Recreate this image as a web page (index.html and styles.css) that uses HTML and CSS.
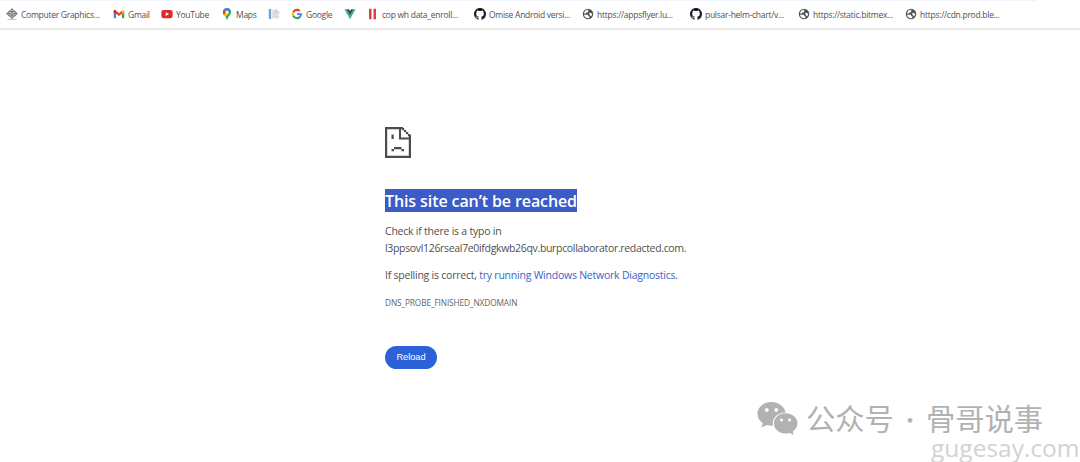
FILE: index.html
```html
<!DOCTYPE html>
<html lang="en">

<head>
  <meta charset="UTF-8">
  <meta name="viewport" content="width=device-width, initial-scale=1.0">
  <title>This site can’t be reached</title>
  <link rel="stylesheet" href="styles.css">
</head>

<body>
  <!-- shared icons -->
  <svg class="defs" width="0" height="0">
    <symbol id="github" viewBox="0 0 16 16">
      <path fill="#1b1f23" d="M8 0C3.58 0 0 3.58 0 8c0 3.54 2.29 6.53 5.47 7.59.4.07.55-.17.55-.38 0-.19-.01-.82-.01-1.49-2.01.37-2.53-.49-2.69-.94-.09-.23-.48-.94-.82-1.13-.28-.15-.68-.52-.01-.53.63-.01 1.08.58 1.23.82.72 1.21 1.87.87 2.33.66.07-.52.28-.87.51-1.07-1.78-.2-3.64-.89-3.64-3.95 0-.87.31-1.59.82-2.15-.08-.2-.36-1.02.08-2.12 0 0 .67-.21 2.2.82a7.6 7.6 0 0 1 4 0c1.53-1.04 2.2-.82 2.2-.82.44 1.1.16 1.92.08 2.12.51.56.82 1.27.82 2.15 0 3.07-1.87 3.75-3.65 3.95.29.25.54.73.54 1.48 0 1.07-.01 1.93-.01 2.2 0 .21.15.46.55.38A8 8 0 0 0 16 8c0-4.42-3.58-8-8-8z" />
    </symbol>
    <symbol id="globe" viewBox="0 0 16 16">
      <circle cx="8" cy="8" r="7" fill="#505357" />
      <path fill="#fff" d="M9 2.500C7.500 3 7.600 4.200 8.500 4.600c-.3 1.200-1.500 1.100-2.700 1.300 0 1.200-.6 1.400-1.800 1.400H2.700C3 4.500 5.500 2 9 2.500z" />
      <path fill="#fff" d="M2.700 9h3.800c1.500 0 2 .8 2 2h1.300v2.200C6.500 14.300 3 12.500 2.700 9z" />
      <path fill="#fff" d="M9.700 6.700h2l1.700 1c.1 1.600-.5 2.700-1.400 3.600-.3-1.100-.9-1.400-1.700-1.400V8.400c-.8 0-1.100-1-.6-1.700z" />
    </symbol>
  </svg>

  <nav class="bookmarks">
    <a class="bookmark">
      <svg class="icon" viewBox="0 0 16 16">
        <path fill="none" stroke="#6d7073" stroke-width="1.300" d="M8 1l7 6.500L8 14 1 7.500zM4 4.500h8v6H4zM1 7.500h14M8 1v13" />
        <circle cx="8" cy="7.500" r="2" fill="#b5b5b5" stroke="#6d7073" />
        <path stroke="#aaa" d="M2 15.500h12" />
      </svg>
      <span>Computer Graphics...</span>
    </a>
    <a class="bookmark">
      <svg class="icon" viewBox="0 0 16 16">
        <path fill="#4285f4" d="M1 4v9.500h3V7z" />
        <path fill="#34a853" d="M15 4v9.500h-3V7z" />
        <path fill="#ea4335" d="M1 3.500Q2 2 4 3.500l4 3 4-3v4L8 10.500 1 5.500z" />
        <path fill="#fbbc04" d="M12 3.500q2-1.500 3 0v2l-3 2z" />
        <path fill="#c5221f" d="M1 3.500q1-1.500 3 0v4l-3-2z" />
      </svg>
      <span>Gmail</span>
    </a>
    <a class="bookmark">
      <svg class="icon" viewBox="0 0 16 16">
        <rect x="0.500" y="2.500" width="15" height="11" rx="3" fill="#e12b26" />
        <path fill="#fff" d="M6.300 5.500v5l4.400-2.500z" />
      </svg>
      <span>YouTube</span>
    </a>
    <a class="bookmark">
      <svg class="icon" viewBox="0 0 16 16">
        <path fill="#34a853" d="M2.500 5.500a5.500 5.500 0 0 1 11 0C13.500 9.500 9 11 8.500 15.500h-1C7 11 2.500 9.500 2.500 5.500z" />
        <path fill="#fbbc04" d="M3.500 8.700L7.500 4l3.500 3-5 5.300z" />
        <path fill="#ea4335" d="M2.500 5.500c0-1.500.5-2.500 1.300-3.500L8 5.500 3.500 9z" />
        <path fill="#4285f4" d="M3.800 2C6-.7 11-.7 12.500 2.500L8 7z" />
        <circle cx="8" cy="5.500" r="1.900" fill="#fff" />
      </svg>
      <span>Maps</span>
    </a>
    <a class="bookmark">
      <svg class="icon" viewBox="0 0 16 16">
        <path fill="#e8ecef" d="M4 1.500h8l3 3v10H4z" />
        <path fill="#6fa3cf" d="M1 1.500h3v13H1z" />
        <path stroke="#b6bec5" fill="none" d="M6 5h5M6 8h7M6 11h8M11 1.500v4h4" />
      </svg>
    </a>
    <a class="bookmark">
      <svg class="icon" viewBox="-4 -4 56 56">
        <path fill="#ea4335" d="M24 9.500c3.500 0 6.700 1.200 9.200 3.600l6.900-6.900C35.900 2.400 30.500 0 24 0 14.600 0 6.500 5.400 2.600 13.200l8 6.200C12.400 13.700 17.700 9.500 24 9.500z" />
        <path fill="#4285f4" d="M47 24.500c0-1.600-.2-3.100-.4-4.500H24v9h12.900c-.6 3-2.200 5.500-4.700 7.200l7.700 6C44.400 38 47 31.800 47 24.500z" />
        <path fill="#fbbc05" d="M10.500 28.600a14.500 14.500 0 0 1 0-9.200l-8-6.200a24 24 0 0 0 0 21.600z" />
        <path fill="#34a853" d="M24 48c6.500 0 11.900-2.100 15.900-5.800l-7.700-6c-2.200 1.500-4.900 2.300-8.200 2.300-6.300 0-11.600-4.200-13.500-9.900l-8 6.200C6.500 42.600 14.600 48 24 48z" />
      </svg>
      <span>Google</span>
    </a>
    <a class="bookmark">
      <svg class="icon" viewBox="0 0 16 16">
        <path fill="#41b883" d="M.5 1.500h3.300L8 9l4.200-7.500h3.300L8 15z" />
        <path fill="#35495e" d="M3.500 1.500h3L8 4l1.500-2.500h3L8 9.800z" />
      </svg>
    </a>
    <a class="bookmark">
      <svg class="icon" viewBox="0 0 16 16">
        <path fill="#d94339" d="M2.700 1h3.300v14H2.700zM8.700 1H12v14H8.700z" />
      </svg>
      <span>cop wh data_enroll...</span>
    </a>
    <a class="bookmark">
      <svg class="icon"><use href="#github" /></svg>
      <span>Omise Android versi...</span>
    </a>
    <a class="bookmark">
      <svg class="icon"><use href="#globe" /></svg>
      <span>https://appsflyer.lu...</span>
    </a>
    <a class="bookmark">
      <svg class="icon"><use href="#github" /></svg>
      <span>pulsar-helm-chart/v...</span>
    </a>
    <a class="bookmark">
      <svg class="icon"><use href="#globe" /></svg>
      <span>https://static.bitmex...</span>
    </a>
    <a class="bookmark">
      <svg class="icon"><use href="#globe" /></svg>
      <span>https://cdn.prod.ble...</span>
    </a>
  </nav>

  <main class="error">
    <svg class="sad-page" viewBox="0 0 26 31">
      <path fill="none" stroke="#4c4c4c" stroke-width="2.200" d="M18 1.100H1.100v28.800h23.800V8" />
      <path fill="none" stroke="#4c4c4c" stroke-width="2" d="M15 1v10.500h10" />
      <path fill="#4c4c4c" d="M17 1h2.200v2.200H17zM19 3h2.200v2.200H19zM21 5h2.200v2.200H21zM23 7h2.200v2.200H23zM6.500 7.500h2.200v4.600H6.500zM9 20h7.500v2.200H9zM6.500 22h2.500v2.200H6.500zM16.500 22H19v2.200h-2.500z" />
    </svg>
    <h1><span class="selected">This site can’t be reached</span></h1>
    <p class="typo">Check if there is a typo in<br><span class="host">l3ppsovl126rseal7e0ifdgkwb26qv.burpcollaborator.redacted.com.</span></p>
    <p class="spelling">If spelling is correct, <a class="link">try running Windows Network Diagnostics</a>.</p>
    <p class="code">DNS_PROBE_FINISHED_NXDOMAIN</p>
    <button class="reload">Reload</button>
  </main>

  <div class="watermark">
    <svg class="wechat" viewBox="0 0 41 33">
      <path fill="#b2b2b2" d="M14.500 0C6.500 0 .5 5.400.5 12c0 3.800 2 7 5.300 9.200L4.500 25.500l5.200-2.600c1.700.5 3.300.8 5.100.8h1.200C14.500 16 21 10.500 28.600 10.500 27.500 4.500 21.500 0 14.500 0z" />
      <path fill="#b2b2b2" d="M28.500 11.300C21.800 11.300 17 16 17 21.500S21.800 31.500 28.500 31.500c1.500 0 2.900-.2 4.200-.6l4 2.100-1-3.500c2.700-1.800 4.800-4.500 4.800-7.900 0-5.500-5.300-10.300-12-10.300z" />
      <g fill="#fff">
        <circle cx="9.800" cy="8" r="1.900" />
        <circle cx="19.300" cy="8" r="1.900" />
        <circle cx="24.500" cy="18" r="1.500" />
        <circle cx="32.500" cy="18" r="1.500" />
      </g>
    </svg>
    <span class="account">公众号</span>
    <span class="dot">·</span>
    <span class="account">骨哥说事</span>
  </div>
  <div class="site">gugesay.com</div>
</body>

</html>
```
FILE: styles.css
```css
body {
  margin: 0;
  height: 462px;
  overflow: hidden;
  position: relative;
  background-color: #fff;
  color: #505050;
  font-family: "Open Sans", "Noto Sans", sans-serif;
}

.defs {
  display: block;
}

.bookmarks {
  display: grid;
  grid-template-columns: 107px 48px 60px 47px 23px 53px 23px 107px 108px 108px 108px 107px 110px;
  align-items: center;
  box-sizing: border-box;
  height: 30px;
  padding-left: 6px;
  border-bottom: 2px solid #e9e9e9;
  background: linear-gradient(#f1f4fc, #f1f4fc) no-repeat 0 0 / 1036px 1px;
}

.bookmark {
  display: flex;
  align-items: center;
  gap: 3px;
  font-size: 8.5px;
  letter-spacing: -0.27px;
  white-space: nowrap;
}

.icon {
  width: 12px;
  height: 12px;
  flex: none;
}

.error {
  width: 320px;
  padding: 97px 0 0 385px;
}

.sad-page {
  display: block;
  width: 26px;
  height: 31px;
}

h1 {
  margin: 31px 0 0;
  font-size: 16px;
  font-weight: 600;
  line-height: 23px;
  letter-spacing: -0.1px;
}

.selected {
  display: inline-block;
  box-sizing: border-box;
  height: 23px;
  padding-top: 1px;
  color: #fff;
  background-color: #3b5bc6;
  vertical-align: top;
}

p {
  margin: 0;
  font-size: 10.5px;
  line-height: 17px;
  letter-spacing: -0.23px;
  white-space: nowrap;
}

.typo {
  margin-top: 11px;
}

.host {
  letter-spacing: -0.33px;
}

.spelling {
  margin-top: 10px;
}

.link {
  color: #3a62c9;
}

.code {
  margin-top: 10px;
  font-size: 8.3px;
  letter-spacing: -0.12px;
  color: #666;
}

.reload {
  display: block;
  width: 52px;
  height: 23px;
  margin-top: 35px;
  padding: 0 0 1px;
  border: none;
  border-radius: 12px;
  background-color: #2b62d9;
  color: #fff;
  font-family: "Liberation Sans", sans-serif;
  font-size: 9.2px;
}

/* overlay in the bottom right corner */
.watermark {
  position: absolute;
  left: 757px;
  top: 402px;
  display: flex;
  align-items: center;
  color: #b2b2b2;
  font-family: "Noto Sans CJK SC", sans-serif;
  font-size: 29.3px;
  line-height: 30px;
}

.wechat {
  width: 41px;
  height: 33px;
  margin-right: 8px;
}

.account {
  margin-top: -3px;
}

.dot {
  width: 32px;
  margin-top: -2px;
  font-size: 22px;
  text-align: center;
}

.site {
  position: absolute;
  left: 931px;
  top: 434px;
  color: #d2d2d2;
  font-size: 24.5px;
  line-height: 28px;
}
```
